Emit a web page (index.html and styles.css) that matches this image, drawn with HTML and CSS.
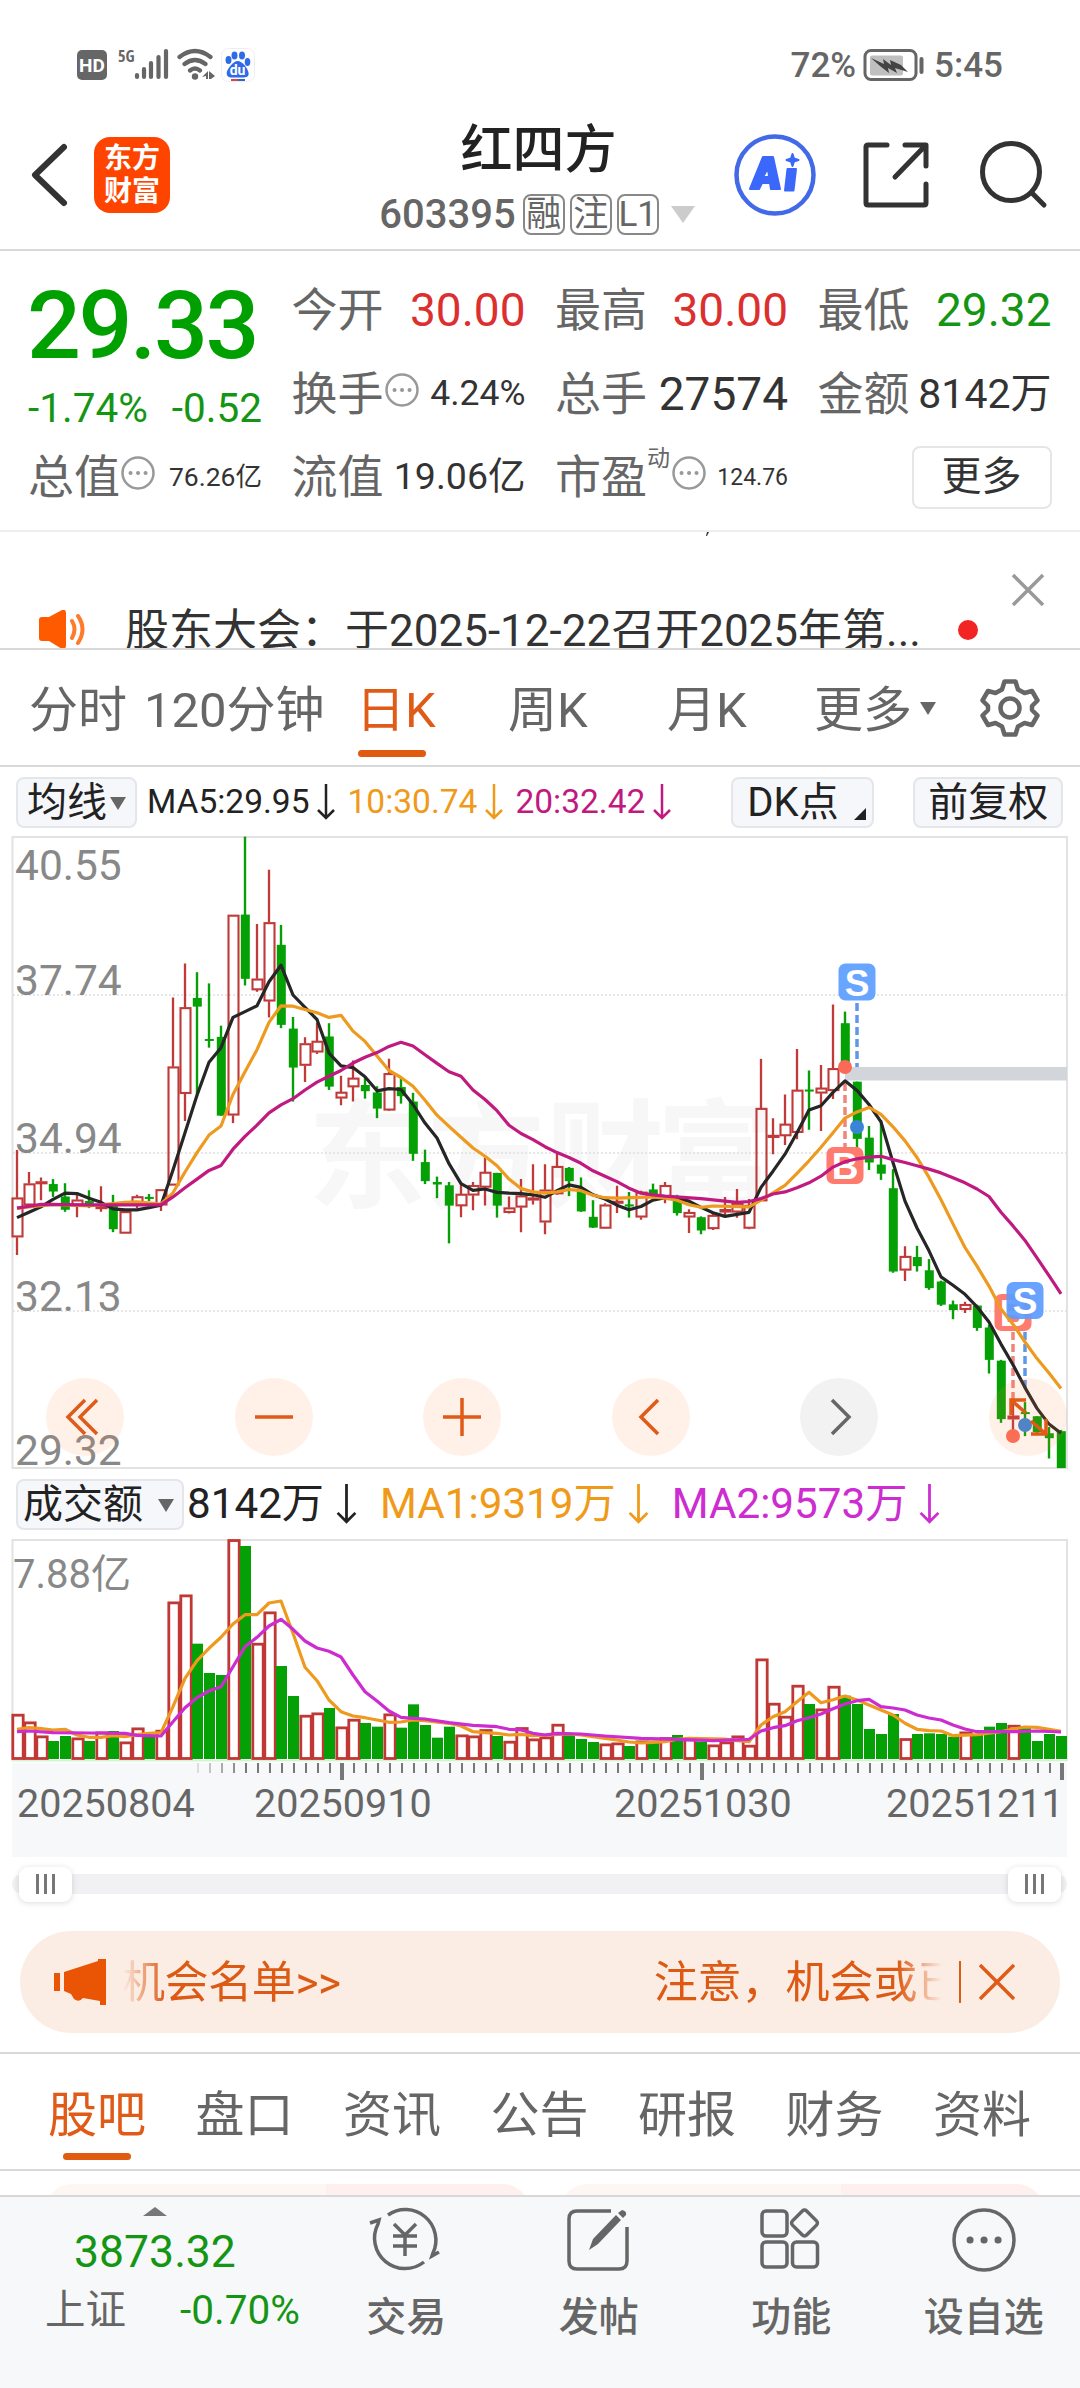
FILE: index.html
```html
<!DOCTYPE html>
<html lang="zh-CN">
<head>
<meta charset="utf-8">
<title>红四方 603395</title>
<link rel="stylesheet" href="styles.css">
</head>
<body>
<div class="app">
  <div class="status">
    <svg class="status-left" width="200" height="40" viewBox="60 45 200 40">
      <rect x="77" y="50" width="30" height="30" rx="5" fill="#666"/>
      <text x="92" y="72" class="hd">HD</text>
      <text x="118" y="62" class="g5">5G</text>
      <g stroke="#666" stroke-width="4.200" stroke-linecap="round">
        <path d="M137 75v2M144 69v8M151 63v14M158.500 57v20M166 51v26"/>
      </g>
      <g fill="none" stroke="#666" stroke-width="4.200" stroke-linecap="round">
        <path d="M179.500 57q15.500-12 31 0M184.500 64q10.500-8 21 0M190 70.500q5-4 10 0"/>
      </g>
      <circle cx="195" cy="76.500" r="3.200" fill="#666"/>
      <path d="M202 77l6-6v8h-2v-3zM209 71l6 5-4 3h-2z" fill="#666"/>
      <rect x="221.500" y="48.500" width="33" height="33" rx="7" fill="#fff" stroke="#eee"/>
      <g fill="#2f6be8">
        <ellipse cx="228.500" cy="60" rx="3" ry="4"/><ellipse cx="234.500" cy="55.500" rx="3" ry="4"/><ellipse cx="242" cy="55.500" rx="3" ry="4"/><ellipse cx="247.500" cy="62" rx="2.800" ry="4"/>
        <path d="M237.500 61c5 0 10 7 11 11.500s-3 5-5 5h-12c-4 0-5.500-2.500-4.500-6s6.500-10.500 10.500-10.500z"/>
      </g>
      <text x="237.500" y="75" class="du">du</text>
      <path d="M231 80h7" stroke="#d44" stroke-width="2"/><path d="M238 80h7" stroke="#36c" stroke-width="2"/>
    </svg>
    <div class="status-right">
      <span>72%</span>
      <svg width="62" height="34" viewBox="862 47 62 34">
        <rect x="865" y="49.500" width="51" height="29" rx="6" fill="none" stroke="#666" stroke-width="3"/>
        <rect x="870" y="54.500" width="33" height="20" rx="2" fill="#bfbfbf"/>
        <path d="M871 57l13 6-1-5 8 6-1-5 11 5 7 7-13-4 2 5-9-5 1 5-9-7z" fill="#444"/>
        <path d="M921.500 58v13" stroke="#666" stroke-width="4" stroke-linecap="round"/>
      </svg>
      <span>5:45</span>
    </div>
  </div>

  <header class="header">
    <svg class="back" width="40" height="66" viewBox="0 0 40 66"><path d="M34 5L5 33l29 28" fill="none" stroke="#333" stroke-width="6" stroke-linecap="round" stroke-linejoin="round"/></svg>
    <div class="logo"><span>东方</span><span>财富</span></div>
    <div class="title">
      <h1>红四方</h1>
      <div class="code"><b>603395</b><i>融</i><i>注</i><i>L1</i><span class="tri"></span></div>
    </div>
    <svg class="head-icons" width="330" height="90" viewBox="730 130 330 90">
      <circle cx="775" cy="175" r="38.500" fill="none" stroke="#4169e8" stroke-width="4.500"/>
      <g fill="#3b68fb" stroke="#3b68fb" stroke-width="2" stroke-linejoin="round">
        <path d="M750 189l13-32h10l7 32h-9l-1-6h-8l-3 6zM763 177h6l-1-9z" fill-rule="evenodd"/>
        <path d="M787.500 169h8.500l-2.500 21.500h-8.500z"/>
        <path d="M792.500 154l1.500 4.500 4.500 1.500-4.500 1.500-1.500 4.500-1.500-4.500-4.500-1.500 4.500-1.500z"/>
      </g>
      <g fill="none" stroke="#333" stroke-width="5" stroke-linecap="round" stroke-linejoin="round">
        <path d="M887 145h-19q-2 0-2 2v56q0 2 2 2h56q2 0 2-2v-19M905 145h21v21M925 146l-30 31"/>
        <circle cx="1011" cy="172" r="28.500"/><path d="M1032 193l12 12"/>
      </g>
    </svg>
  </header>

  <section class="quote">
    <div class="price">
      <strong>29.33</strong>
      <div class="change"><span>-1.74%</span><span>-0.52</span></div>
    </div>
    <div class="cell"><label>今开</label><span class="v46 up">30.00</span></div>
    <div class="cell"><label>最高</label><span class="v46 up">30.00</span></div>
    <div class="cell"><label>最低</label><span class="v46 down">29.32</span></div>
    <div class="cell"><label>换手</label><svg class="info" viewBox="0 0 36 36"><circle cx="18" cy="18" r="15.500"/><path d="M10.500 18h.1M18 18h.1M25.500 18h.1"/></svg><span class="v35">4.24%</span></div>
    <div class="cell"><label>总手</label><span class="v46">27574</span></div>
    <div class="cell"><label>金额</label><span class="v40">8142万</span></div>
    <div class="cell"><label>总值</label><svg class="info" viewBox="0 0 36 36"><circle cx="18" cy="18" r="15.500"/><path d="M10.500 18h.1M18 18h.1M25.500 18h.1"/></svg><span class="v26">76.26亿</span></div>
    <div class="cell"><label>流值</label><span class="v37">19.06亿</span></div>
    <div class="cell"><label>市盈</label><sup>动</sup><svg class="info" viewBox="0 0 36 36"><circle cx="18" cy="18" r="15.500"/><path d="M10.500 18h.1M18 18h.1M25.500 18h.1"/></svg><span class="v23">124.76</span></div>
    <div class="cell end"><button class="more">更多</button></div>
  </section>

  <section class="notice">
    <svg class="speaker" width="50" height="40" viewBox="0 0 50 40"><path d="M1 10q0-3 3-3h7L24 0q4-1 4 3v32q0 5-4 4L11 31H4q-3 0-3-3z" fill="#ff5a00"/><path d="M34 11q5 8 0 17M40 6q9 13 0 27" fill="none" stroke="#ff7a2a" stroke-width="4" stroke-linecap="round"/></svg>
    <p>股东大会：于2025-12-22召开2025年第...</p>
    <span class="dot"></span>
    <svg class="close" width="36" height="36" viewBox="0 0 36 36"><path d="M3 3l30 30M33 3L3 33" stroke="#999" stroke-width="3.500"/></svg>
    <svg class="tail" width="6" height="5" viewBox="0 0 6 5"><path d="M3 0h2l-2 4H2z" fill="#333"/></svg>
  </section>

  <nav class="ktabs">
    <span>分时</span><span>120分钟</span><span class="on">日K</span><span>周K</span><span>月K</span><span>更多<i class="tri dark"></i></span>
    <svg width="62" height="62" viewBox="-31 -31 62 62" fill="none" stroke="#666" stroke-width="4.500" stroke-linejoin="round"><path d="M-5.500-26.500h11l2.500 8 6.500 3.500 7.500-2 5.500 9.500-5.500 5.500v4l5.500 5.500-5.500 9.500-7.500-2-6.500 3.500-2.500 8h-11l-2.500-8-6.500-3.500-7.500 2-5.500-9.500 5.500-5.500v-4l-5.500-5.500 5.500-9.500 7.500 2 6.500-3.500z"/><circle r="9.500"/></svg>
  </nav>

  <div class="ind">
    <span class="chip chip-ma">均线<i class="tri dark"></i></span>
    <span class="m5">MA5:29.95</span><svg class="arr" viewBox="0 0 18 36"><path d="M9 0v33M1 26l8 8 8-8"/></svg>
    <span class="m10">10:30.74</span><svg class="arr m10" viewBox="0 0 18 36"><path d="M9 0v33M1 26l8 8 8-8"/></svg>
    <span class="m20">20:32.42</span><svg class="arr m20" viewBox="0 0 18 36"><path d="M9 0v33M1 26l8 8 8-8"/></svg>
    <span class="chip chip-dk">DK点<i class="corner"></i></span>
    <span class="chip chip-fq">前复权</span>
  </div>

  <svg id="kchart" class="kchart" width="1080" height="633" viewBox="0 0 1080 633">
    <rect x="12.500" y="1" width="1054.500" height="631" fill="#fff" stroke="#e2e2e2" stroke-width="2"/>
    <g class="watermark"><text x="308" y="363">东</text><text x="427" y="363">方</text><text x="546" y="363">财</text><text x="657" y="363">富</text></g>
    <path d="M13 159h1054M13 317h1054M13 475h1054" stroke="#e0e0e0" stroke-width="1.500" stroke-dasharray="2 2"/>
    <g class="ylab"><text x="15" y="44">40.55</text><text x="15" y="159">37.74</text><text x="15" y="317">34.94</text><text x="15" y="475">32.13</text><text x="15" y="629">29.32</text></g>
    <g id="candles"></g>
    <rect x="845" y="231" width="222" height="13.500" fill="#d2d6db"/>
    <g stroke-width="3.500" stroke-dasharray="8 4">
      <path d="M857 167v64M1025 484v68" stroke="#5f98e8"/>
      <path d="M845 247v64M1013 496v68" stroke="#f0857a"/>
    </g>
    <g class="bs">
      <rect x="826.500" y="311" width="37" height="37" rx="7" fill="#ff7b6e"/><text x="845" y="342.500">B</text>
      <rect x="994.500" y="458" width="37" height="37" rx="7" fill="#ff7b6e"/><text x="1013" y="489.500">B</text>
    </g>
    <g id="averages" fill="none" stroke-width="3.200" stroke-linejoin="round"></g>
    <g class="bs">
      <rect x="838.500" y="127.500" width="37" height="37" rx="7" fill="#68a5ff"/><text x="857" y="159.500">S</text>
      <rect x="1006.500" y="446" width="37" height="37" rx="7" fill="#5b9cff" fill-opacity=".92"/><text x="1025" y="477.500">S</text>
    </g>
    <g fill="#f96b57"><circle cx="845" cy="231" r="7"/><circle cx="1013" cy="600" r="7"/></g>
    <g fill="#3a84d8"><circle cx="857" cy="291" r="7"/><circle cx="1025" cy="589" r="7"/></g>
    <g class="pads">
      <circle cx="85" cy="581" r="39"/><circle cx="274" cy="581" r="39"/><circle cx="462" cy="581" r="39"/><circle cx="651" cy="581" r="39"/><circle class="off" cx="839" cy="581" r="39"/><circle cx="1028" cy="581" r="39"/>
    </g>
    <g fill="none" stroke="#e05a18" stroke-width="3.500">
      <path d="M85 564l-17 17 17 17M97 564l-17 17 17 17M255 581h38M443 581h38M462 562v38M658 564l-17 17 17 17"/>
      <path d="M832 564l17 17-17 17" stroke="#666"/>
      <path d="M1026 564h-15v15M1011 564l15 13M1031 598h15v-15M1046 598l-15-13"/>
    </g>
  </svg>

  <div class="volhead">
    <span class="chip chip-vol">成交额<i class="tri dark"></i></span>
    <span class="v0">8142万</span><svg class="arr" viewBox="0 0 18 36"><path d="M9 0v33M1 26l8 8 8-8"/></svg>
    <span class="v1">MA1:9319万</span><svg class="arr m10" viewBox="0 0 18 36"><path d="M9 0v33M1 26l8 8 8-8"/></svg>
    <span class="v2">MA2:9573万</span><svg class="arr v2" viewBox="0 0 18 36"><path d="M9 0v33M1 26l8 8 8-8"/></svg>
  </div>

  <svg class="vchart" width="1080" height="318" viewBox="0 0 1080 318">
    <rect x="12" y="224" width="1055" height="94" fill="#f7f8fa"/>
    <path d="M12.500 222V1H1067v221" fill="none" stroke="#e2e2e2" stroke-width="2"/>
    <path d="M12 221.500h1055" stroke="#d5f2d5" stroke-width="2"/>
    <text class="vmax" x="13" y="49">7.88亿</text>
    <g id="bars"></g>
    <g id="volavg" fill="none" stroke-width="3.200" stroke-linejoin="round"></g>
    <g id="ticks" stroke="#777"></g>
    <g class="dates"><text x="17" y="278">20250804</text><text x="254" y="278">20250910</text><text x="614" y="278">20251030</text><text x="886" y="278">20251211</text></g>
  </svg>

  <div class="slider"><div class="track"><span class="handle"><i></i><i></i><i></i></span><span class="handle"><i></i><i></i><i></i></span></div></div>

  <div class="banner">
    <svg width="52" height="46" viewBox="0 0 52 46" fill="#e95504"><path d="M0 14h6v18H0zM10 13L44 2V0h8v46h-6v-4l-17-3q-4 5-9 1l-3-5-7-3z"/></svg>
    <div class="marquee"><span>机会名单&gt;&gt;</span><span>注意，机会或已</span></div>
    <span class="bar"></span>
    <svg width="36" height="36" viewBox="0 0 36 36"><path d="M1 1l34 34M35 1L1 35" stroke="#e05a18" stroke-width="3.500"/></svg>
  </div>

  <nav class="tabs"><span class="on">股吧</span><span>盘口</span><span>资讯</span><span>公告</span><span>研报</span><span>财务</span><span>资料</span></nav>
  <div class="cards"><div></div><div></div></div>

  <footer class="bottom">
    <div class="index"><i class="up-tri"></i><strong>3873.32</strong><div><span class="name">上证</span><span>-0.70%</span></div></div>
    <div class="act">
      <svg width="76" height="70" viewBox="0 0 76 70"><path d="M20 10a30.500 30.500 0 0 1 45 38l-1 3 7-4M56 57a30.500 30.500 0 0 1-46-38l1-4-9 3"/><path d="M26 19l11 11 11-11M25 31h24M25 41h24M37 30v21"/></svg>
      <span>交易</span></div>
    <div class="act">
      <svg width="76" height="70" viewBox="0 0 76 70"><path d="M50 6H16q-8 0-8 8v42q0 8 8 8h42q8 0 8-8V22"/><path d="M28 45l4-11 23-24 5 5-23 24zM57 8l4-3q5 1 4 5l-3 3z" fill="#666" stroke="none"/></svg>
      <span>发帖</span></div>
    <div class="act">
      <svg width="76" height="70" viewBox="0 0 76 70"><rect x="9" y="6" width="25" height="25" rx="4"/><rect x="9" y="37" width="25" height="25" rx="4"/><rect x="39.500" y="37" width="25" height="25" rx="4"/><rect x="41.500" y="8" width="20" height="20" rx="3" transform="rotate(45 51.500 18)"/></svg>
      <span>功能</span></div>
    <div class="act">
      <svg width="76" height="70" viewBox="0 0 76 70"><circle cx="38" cy="35" r="30"/><path d="M24 35h.1M38 35h.1M52 35h.1" stroke-width="7" stroke-linecap="round"/></svg>
      <span>设自选</span></div>
  </footer>
</div>
<script src="chart.js"></script>
</body>
</html>
```
FILE: styles.css
```css
* { box-sizing: border-box; }
body { margin: 0; background: #fff; color: #333; font-family: Roboto, "Noto Sans CJK SC", sans-serif; line-height: 1; }
.app { width: 1080px; height: 2388px; overflow: hidden; display: flex; flex-direction: column; }
.app > * { flex: none; }
svg { display: block; flex: none; }
span, label, b, p { white-space: nowrap; }
i { font-style: normal; }
.tri { display: block; width: 0; height: 0; border: 12.500px solid transparent; border-top: 17px solid #ccc; border-bottom: 0; }
.tri.dark { border-width: 13px 8.500px 0; border-top-color: #666; }

.status { height: 96px; display: flex; justify-content: space-between; padding: 45px 77px 0 60px; }
.status-right { display: flex; align-items: center; height: 40px; font-size: 35px; font-weight: 500; color: #666; }
.status-right svg { margin: 0 10px 0 6px; }
.hd { font: 700 19px Roboto; fill: #fff; text-anchor: middle; }
.g5 { font: 700 16px "Open Sans", Roboto; font-stretch: condensed; fill: #666; }
.du { font: 700 14px Roboto; fill: #fff; text-anchor: middle; }

.header { height: 155px; border-bottom: 2px solid #d8d8d8; display: flex; align-items: flex-start; padding: 0 20px 0 30px; }
.back { margin-top: 46px; }
.logo { width: 76px; height: 76px; margin: 41px 0 0 24px; border-radius: 16px; background: #ff4400; color: #fff; display: flex; flex-direction: column; align-items: center; justify-content: center; gap: 5px; font-size: 28px; font-weight: 700; }
.title { width: 560px; height: 150px; display: flex; flex-direction: column; align-items: center; padding: 29px 0 0 177px; }
h1 { margin: 0; font-size: 52px; font-weight: 500; color: #222; line-height: 52px; }
.code { display: flex; align-items: center; gap: 5px; margin: 17px 3px 0 0; color: #666; }
.code b { font-size: 40px; font-weight: 500; margin-right: 2px; }
.code i { width: 42px; height: 41px; border: 2px solid #888; border-radius: 8px; font-size: 35px; display: flex; align-items: center; justify-content: center; }
.code .tri { margin-left: 7px; }
.head-icons { margin-top: 34px; }

.quote { height: 281px; border-bottom: 2px solid #eee; padding: 17px 29px 0 28px; display: grid; grid-template-columns: 234px 234px 233px 234px; column-gap: 29.500px; grid-template-rows: 84px 84px 82px; }
.price { grid-row: span 2; color: #00a000; }
.price strong { display: block; font-size: 95px; font-weight: 500; letter-spacing: -2.500px; margin: 11px 0 0 -1px; line-height: 94px; }
.change { display: flex; justify-content: space-between; font-size: 40.500px; margin-top: 15px; color: #149614; }
.cell { display: flex; align-items: center; color: #333; }
.cell label { font-size: 46px; color: #666; }
.cell span { margin-left: auto; }
.cell.end { justify-content: flex-end; }
.info { width: 36px; height: 36px; fill: none; stroke: #999; stroke-width: 2.500; margin-top: -8px; }
.info path { stroke-width: 4; stroke-linecap: round; }
.cell sup { font-size: 23px; color: #666; margin: -38px 0 0; width: 24px; }
.v46 { font-size: 46px; } .v40 { font-size: 41px; } .v37 { font-size: 37.500px; } .v35 { font-size: 35.500px; } .v26 { font-size: 26.500px; } .v23 { font-size: 23px; }
.up { color: #dc3030; } .down { color: #149614; }
.more { width: 140px; height: 63px; border: 2px solid #e6e6e6; border-radius: 8px; background: #fff; color: #333; font: 40px/1 Roboto, "Noto Sans CJK SC", sans-serif; padding: 0; }

.notice { height: 118px; border-bottom: 2px solid #d8d8d8; position: relative; display: flex; align-items: flex-start; padding-left: 38px; overflow: hidden; }
.speaker { margin-top: 78px; }
.notice p { margin: 77px 0 0 37px; font-size: 44px; width: 833px; line-height: 44px; }
.dot { width: 20px; height: 20px; border-radius: 50%; background: #f22424; margin-top: 88px; }
.close { margin: 40px 0 0 32px; }
.tail { position: absolute; left: 704px; top: 0; }

.ktabs { height: 117px; border-bottom: 2px solid #d8d8d8; display: grid; grid-template-columns: 115px 212px 152px 159px 147px 165px 62px; align-items: center; padding: 0 0 0 29px; font-size: 49px; color: #666; }
.ktabs span { height: 115px; display: flex; align-items: center; position: relative; padding-top: 5px; }
.ktabs .tri { margin: 0 0 4px 8px; }
.on { color: #e05a18; position: relative; }
.on::after { content: ""; position: absolute; background: #e05a0f; width: 68px; height: 7px; border-radius: 4px; bottom: 8px; left: 2px; }

.ind, .volhead { height: 69px; display: flex; align-items: center; padding: 1px 0 0 16px; font-size: 33.500px; color: #222; }
.chip { height: 51px; border: 2px solid #e4e6ea; border-radius: 8px; background: #f6f7fa; display: flex; align-items: center; font-size: 40px; color: #222; flex: none; position: relative; padding-top: 2px; }
.chip-ma { width: 121px; padding-left: 9px; margin-right: 10px; }
.chip-ma .tri { margin-left: 3px; }
.chip-dk { width: 143px; padding-left: 14px; margin-left: 60px; }
.corner { border: 6.500px solid #222; border-top-color: transparent; border-left-color: transparent; position: absolute; right: 6px; bottom: 6px; }
.chip-fq { width: 150px; margin-left: 39px; justify-content: center; }
.arr { width: 18px; height: 36px; fill: none; stroke: #222; stroke-width: 2.500; margin: 0 12px 0 8px; }
.arr.m10 { stroke: #f09a1a; } .arr.m20 { stroke: #c01a80; } .arr.v2 { stroke: #cc2cd0; }
.m10, .v1 { color: #f09a1a; } .m20 { color: #c01a80; } .v2 { color: #cc2cd0; }
.ind .arr.m20 { margin-right: 0; }

.watermark { font: 700 118px "Noto Sans CJK SC"; fill: #f7f7f7; }
.ylab { font: 42.500px Roboto; fill: #888; }
.bs { font: 700 37px "Liberation Sans"; fill: #fff; text-anchor: middle; }
.pads { fill: #ff8040; fill-opacity: .12; }
.pads .off { fill: #888; fill-opacity: .11; }

.volhead { height: 70px; font-size: 42.200px; padding-top: 0; }
.chip-vol { width: 168px; padding-left: 5px; margin-right: 3px; }
.chip-vol .tri { margin-left: 15px; }
.volhead .arr { margin: 0 23px 0 12px; width: 21px; height: 40px; }
.vmax { font: 40px Roboto, "Noto Sans CJK SC"; fill: #888; }
.dates { font: 39.500px Roboto; fill: #666; }

.slider { height: 74px; padding: 17px 13px 0 12px; }
.track { height: 20px; border-radius: 10px; background: #f1f1f3; display: flex; justify-content: space-between; align-items: center; padding: 0 6px 0 7px; }
.handle { width: 53px; height: 35px; border-radius: 9px; background: #fff; box-shadow: 0 1px 6px rgba(0,0,0,.14); display: flex; align-items: center; justify-content: center; gap: 5px; }
.handle i { width: 3px; height: 20px; background: #777; }

.banner { height: 102px; margin: 0 20px; border-radius: 51px; background: #fcede4; display: flex; align-items: center; padding: 0 44px 0 34px; color: #dd5a14; }
.marquee { width: 819px; margin-left: 17px; height: 60px; display: flex; align-items: center; overflow: hidden; font-size: 44px; padding-top: 2px; -webkit-mask-image: linear-gradient(90deg, transparent 0, #000 42px, #000 775px, transparent 819px); mask-image: linear-gradient(90deg, transparent 0, #000 42px, #000 775px, transparent 819px); }
.marquee span:first-child { margin-left: -2px; letter-spacing: -.4px; }
.marquee span + span { margin-left: 313px; }
.bar { width: 2px; height: 42px; background: #e05a18; margin: 0 18px 0 17px; }

.tabs { height: 119px; margin-top: 19px; border-top: 2px solid #d8d8d8; border-bottom: 2px solid #d8d8d8; display: flex; gap: 49.500px; padding-left: 48px; font-size: 49px; color: #666; }
.tabs span { height: 115px; display: flex; align-items: center; width: 98px; padding-top: 8px; flex: none; }
.tabs .on::after { left: 15px; bottom: 9px; }
.cards { height: 24px; padding: 13px 37px 0 46px; display: flex; gap: 32px; overflow: hidden; }
.cards div { flex: 1; height: 80px; border-radius: 26px; background: linear-gradient(90deg, #fef6f2 58%, #fdf0ee 58%); }

.bottom { height: 194px; background: #f7f8fa; border-top: 2px solid #d8d8d8; display: grid; grid-template-columns: 310px repeat(4, 192.500px); }
.index { display: flex; flex-direction: column; align-items: center; color: #149614; padding-top: 10px; }
.index .up-tri { border: 12px solid transparent; border-bottom: 9px solid #777; border-top: 0; }
.index strong { font-size: 44.500px; font-weight: 400; margin-top: 14px; }
.index div { display: flex; gap: 54px; font-size: 40.500px; margin-top: 15px; width: 310px; padding-left: 45px; }
.name { color: #666; }
.act { display: flex; flex-direction: column; align-items: center; padding-top: 8px; font-size: 40px; color: #666; font-weight: 500; }
.act svg { fill: none; stroke: #666; stroke-width: 3.500; }
.act span { margin-top: 23px; }
```
FILE: chart.js
```js
const NS = 'http://www.w3.org/2000/svg';
const STEP = 12, X0 = 17, RED = '#bf3a38', GREEN = '#05a005';
const x = i => X0 + i * STEP;
const ky = v => v / 2.412 - 6;
const vy = v => v / 3 - 69;

function add(parent, tag, attrs) {
  const el = document.createElementNS(NS, tag);
  for (const k in attrs) el.setAttribute(k, attrs[k]);
  parent.appendChild(el);
}

// kind, high, body top, body bottom, low
const candles = `r772,887,982,1025 r825,853,905,905 r838,848,853,893 g842,854,872,885 g852,884,916,921 r878,892,906,934 g869,895,902,912 r859,908,912,921 g880,900,963,970 r920,920,973,973 r880,884,905,912 g878,885,889,895 r867,867,905,919 r404,571,857,857 r322,428,636,702 g343,405,426,640 g370,504,508,525 g472,499,689,689 r205,205,688,707 g16,204,359,375 r227,359,386,390 r96,223,413,452 g229,277,470,478 g451,479,573,655 r500,515,568,608 r465,509,536,540 g466,498,619,627 r593,632,647,664 r556,598,620,655 g598,615,630,648 g618,633,672,695 r552,587,676,678 g596,620,642,660 g634,655,781,798 g771,801,847,854 g836,849,855,888 g849,857,906,997 r855,878,907,934 r849,857,881,917 r790,825,862,906 g827,827,906,935 r884,911,923,925 r842,882,910,970 r806,887,893,903 r806,868,946,975 r780,811,878,880 g813,815,847,883 g838,865,920,921 g893,933,959,960 r900,904,961,962 r858,895,900,924 g873,903,908,935 r870,873,934,940 g853,867,885,888 r849,857,888,900 g880,883,924,930 r915,922,934,972 g932,934,966,975 r925,929,962,965 r885,915,922,930 r866,900,922,935 r890,905,961,963 r552,671,895,895 r695,736,742,782 r638,709,738,760 r528,627,730,746 g580,626,630,723 r567,622,635,726 r421,575,629,649 g438,466,570,574 g607,607,745,780 g714,742,802,820 g700,807,829,844 g818,864,1065,1068 r1004,1028,1062,1088 g1003,1030,1052,1065 g1035,1062,1105,1109 g1087,1089,1145,1148 g1135,1144,1158,1180 r1138,1144,1157,1165 g1145,1147,1201,1208 g1193,1200,1278,1311 g1278,1280,1421,1430 r1375,1413,1421,1470 g1380,1404,1408,1462 g1414,1414,1452,1458 g1440,1455,1467,1516 g1447,1450,1539,1539`.split(' ');
const kinds = candles.map(c => c[0]);

const cg = document.getElementById('candles');
candles.forEach((c, i) => {
  const [hi, top, bot, lo] = c.slice(1).split(',').map(v => ky(+v));
  const cx = x(i);
  if (c[0] === 'g') {
    add(cg, 'path', { d: `M${cx} ${hi}V${lo}`, stroke: GREEN, 'stroke-width': 2.4 });
    add(cg, 'rect', { x: cx - 4.2, y: top, width: 9, height: Math.max(2, bot - top), fill: GREEN });
  } else {
    add(cg, 'path', { d: `M${cx} ${hi}V${top}M${cx} ${bot}V${lo}`, stroke: RED, 'stroke-width': 2.3 });
    add(cg, 'rect', { x: cx - 4.5, y: top + .7, width: 10, height: Math.max(1, bot - top - 1.4), fill: 'none', stroke: RED, 'stroke-width': 2.1 });
  }
});

function line(parent, data, y, color) {
  const pts = data.split(' ').map(p => { const [i, v] = p.split(':'); return x(+i) + ',' + y(+v).toFixed(1); });
  add(parent, 'polyline', { points: pts.join(' '), stroke: color });
}
const av = document.getElementById('averages');
line(av, '0:935 1:922 2:909 3:891 4:876 5:877 6:888 7:898 8:914 9:916 10:916 11:911 12:905 13:820 14:730 15:640 16:560 17:525 18:452 19:438 20:424 21:366 22:326 23:398 24:428 25:457 26:538 27:569 28:573 29:595 30:629 31:624 32:626 33:662 34:707 35:743 36:805 37:853 38:869 39:866 40:874 41:876 42:877 43:880 44:886 45:870 46:856 47:862 48:880 49:890 50:905 51:916 52:908 53:893 54:887 55:888 56:895 57:910 58:923 59:932 60:927 61:922 62:862 63:823 64:782 65:730 66:675 67:665 68:633 69:605 70:628 71:662 72:704 73:802 74:895 75:960 76:1015 77:1078 78:1098 79:1120 80:1150 81:1187 82:1240 83:1290 84:1345 85:1395 86:1433 87:1455', ky, '#262626');
line(av, '0:912 3:903 6:907 9:898 10:897 12:902 13:875 14:825 15:778 16:736 17:714 18:638 19:583 20:530 21:464 22:424 23:425 24:433 25:441 26:452 27:447 28:485 29:510 30:545 31:580 32:597 33:618 34:652 35:688 36:715 37:741 38:767 39:787 40:810 41:842 42:865 43:873 44:876 45:873 46:867 47:870 48:881 49:887 50:888 53:885 54:888 55:893 56:904 57:910 58:907 61:909 62:893 63:875 64:857 65:828 66:798 67:765 68:730 69:695 70:680 71:669 72:686 73:716 74:750 75:790 76:838 77:892 78:950 79:1007 80:1052 81:1100 82:1155 83:1192 84:1235 85:1275 86:1310 87:1347', ky, '#ed9a1f');
line(av, '0:912 2:903 6:904 12:904 13:885 14:863 15:842 16:821 17:809 18:770 19:739 20:712 21:682 22:663 23:648 24:627 25:608 26:594 27:580 28:562 29:548 30:537 31:522 32:512 33:521 34:542 35:563 36:583 37:594 38:627 39:650 40:677 41:712 42:732 43:747 44:764 45:778 46:790 47:804 48:822 49:835 50:848 51:864 52:876 53:880 54:883 57:889 60:898 61:896 62:889 63:878 64:873 65:863 66:851 67:835 68:813 69:800 70:793 71:789 72:787 73:795 74:802 75:810 76:818 77:827 78:839 79:851 80:866 81:884 82:922 83:955 84:990 85:1032 86:1075 87:1119', ky, '#c01a80');

const vols = [732,755,797,813,798,803,813,785,783,815,773,800,780,395,374,521,609,615,208,228,519,425,588,678,735,728,714,770,747,759,770,731,773,703,765,803,770,794,797,778,798,813,772,806,800,762,795,807,816,821,818,828,812,812,802,795,806,815,824,815,797,825,566,699,738,645,702,716,648,677,702,777,792,732,805,792,790,792,800,785,795,770,759,765,768,813,792,798];
const bg = document.getElementById('bars');
vols.forEach((v, i) => {
  const top = vy(v), bottom = 220;
  if (kinds[i] === 'g') add(bg, 'rect', { x: x(i) - 5, y: top, width: 11, height: bottom - top, fill: GREEN });
  else add(bg, 'rect', { x: x(i) - 4.2, y: top + 1.2, width: 10.4, height: bottom - top - 1.7, fill: '#fff', stroke: '#c03835', 'stroke-width': 2.8 });
});
const va = document.getElementById('volavg');
line(va, '0:778 1:773 2:776 3:780 4:778 5:795 6:802 7:802 8:797 9:800 10:794 11:790 12:788 13:710 14:625 15:572 16:535 17:502 18:462 19:434 20:434 21:399 22:393 23:490 24:592 25:632 26:690 27:725 28:738 29:743 30:750 31:757 32:756 33:750 34:752 36:760 37:768 38:785 39:788 40:790 41:795 42:793 43:797 46:792 47:795 48:800 49:805 50:810 51:816 52:819 53:817 54:815 55:808 56:805 59:807 60:812 61:815 62:765 63:740 64:725 65:695 66:667 67:698 68:689 69:678 70:690 71:705 72:720 73:735 74:760 75:778 76:782 77:783 78:797 80:794 82:785 83:777 84:771 85:772 86:778 87:784', vy, '#ed9a1f');
line(va, '0:785 1:783 3:788 6:789 9:790 10:796 12:798 13:755 14:713 15:683 16:663 17:650 18:590 19:530 20:502 21:468 22:448 23:478 24:513 25:534 26:544 27:561 28:615 29:665 30:693 31:723 32:742 33:745 34:747 36:758 38:766 40:770 41:778 42:780 43:790 44:795 45:790 47:792 49:798 52:805 55:808 58:812 61:808 62:783 63:773 64:767 65:752 66:743 67:732 68:716 69:702 70:692 71:688 72:710 73:714 74:720 75:735 76:744 77:750 78:765 79:777 80:785 83:785 85:783 87:786', vy, '#cc2cd0');

const tg = document.getElementById('ticks');
for (let i = 15; i < 88; i++) {
  const major = i === 27 || i === 57 || i === 87;
  add(tg, 'path', { d: `M${x(i) + 1} 224v${major ? 17 : 10}`, 'stroke-width': major ? 4 : 2, opacity: Math.min(1, (i - 14) / 5) });
}
```
